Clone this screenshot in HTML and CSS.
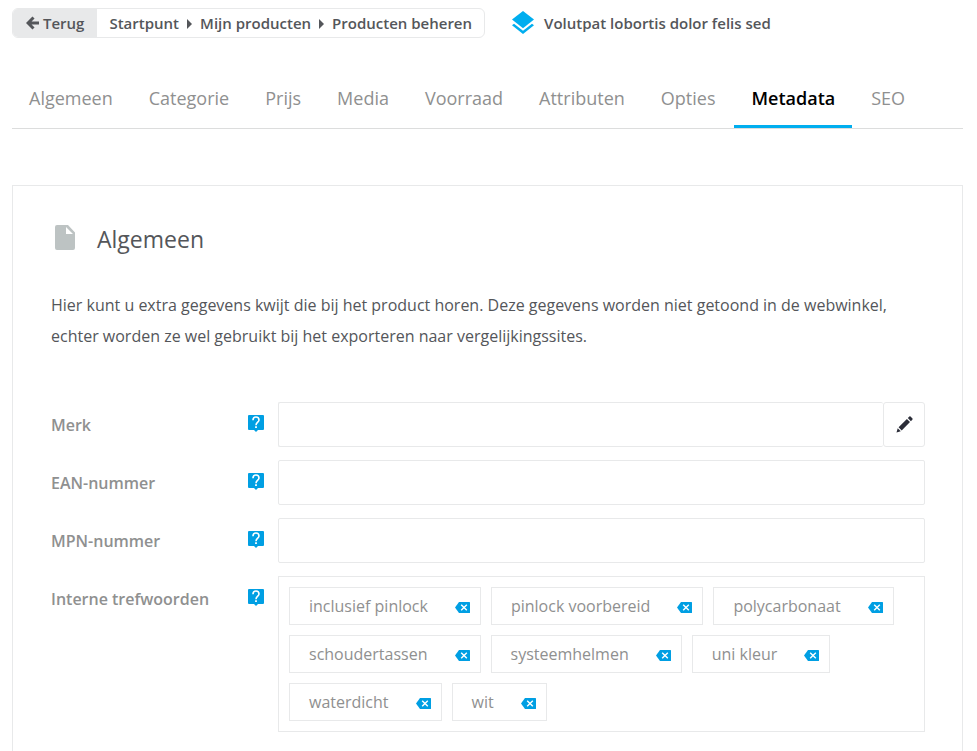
FILE: index.html
```html
<!DOCTYPE html>
<html lang="nl">
<head>
    <meta charset="UTF-8">
    <meta name="viewport" content="width=device-width, initial-scale=1.0">
    <title>Producten beheren</title>
    <link rel="stylesheet" href="styles.css">
</head>
<body>

    <!-- shared icons -->
    <svg class="sprite" aria-hidden="true">
        <symbol id="icon-help" viewBox="0 0 16 17">
            <path fill="#009fe3" d="M1 0h14a1 1 0 0 1 1 1v13a1 1 0 0 1-1 1h-5l-2 2-2-2H1a1 1 0 0 1-1-1V1a1 1 0 0 1 1-1z"/>
            <path fill="none" stroke="#fff" stroke-width="1.600" d="M5 5.200V5a3 3 0 0 1 6 0C11 7 8 7.300 8 10.200"/>
            <path fill="#fff" d="M7.100 11.300h1.800v1.800H7.100z"/>
        </symbol>
        <symbol id="icon-remove" viewBox="0 0 15 11">
            <path fill="#009fe3" d="M4 0h10.500a.5.5 0 0 1 .5.5v10a.5.5 0 0 1-.5.5H4L0 5.500z"/>
            <path fill="none" stroke="#fff" stroke-width="1.400" d="M6.200 2.700l5.600 5.600M11.800 2.700L6.200 8.300"/>
        </symbol>
    </svg>

    <header class="topbar">
        <nav class="breadcrumb" aria-label="Kruimelpad">
            <a href="#" class="back">
                <svg width="13" height="14" viewBox="0 0 13 14"><path fill="none" stroke="#54565a" stroke-width="3" d="M7.500 1.500L2 7l5.500 5.500M2.500 7H13"/></svg>
                Terug
            </a>
            <div class="crumbs">
                <a href="#">Startpunt</a>
                <span class="arrow"></span>
                <a href="#">Mijn producten</a>
                <span class="arrow"></span>
                <a href="#">Producten beheren</a>
            </div>
        </nav>
        <div class="product">
            <svg width="22" height="24" viewBox="0 0 22 24">
                <path fill="#00aeef" d="M11 0l11 8.500L11 17.200 0 8.500z"/>
                <path fill="#00aeef" d="M0 14.300l2-1.600 9 7.100 9-7.100 2 1.600L11 23z"/>
            </svg>
            <span>Volutpat lobortis dolor felis sed</span>
        </div>
    </header>

    <nav class="tabs" aria-label="Productgegevens">
        <a href="#">Algemeen</a>
        <a href="#">Categorie</a>
        <a href="#">Prijs</a>
        <a href="#">Media</a>
        <a href="#">Voorraad</a>
        <a href="#">Attributen</a>
        <a href="#">Opties</a>
        <a href="#" class="active" aria-current="page">Metadata</a>
        <a href="#">SEO</a>
    </nav>

    <main class="panel">
        <h1>
            <svg width="20" height="25" viewBox="0 0 20 25">
                <path fill="#bdc3c3" fill-rule="evenodd" d="M2 0h11l7 7.500V23a2 2 0 0 1-2 2H2a2 2 0 0 1-2-2V2a2 2 0 0 1 2-2zM11 2v7h7z"/>
            </svg>
            Algemeen
        </h1>
        <p class="intro">Hier kunt u extra gegevens kwijt die bij het product horen. Deze gegevens worden niet getoond in de webwinkel, echter worden ze wel gebruikt bij het exporteren naar vergelijkingssites.</p>

        <form class="fields">
            <div class="field">
                <label for="brand">Merk</label>
                <button type="button" class="help" aria-label="Uitleg merk"><svg><use href="#icon-help"/></svg></button>
                <div class="input-group">
                    <input type="text" id="brand">
                    <button type="button" class="edit" aria-label="Merk bewerken">
                        <svg width="17" height="17" viewBox="0 0 17 17">
                            <path fill="#2b2d38" d="M0.500 16.500l1.200-4.300 3.100 3.100zM2.600 11.300l8.300-8.300 3.100 3.100-8.300 8.300zM11.800 2.100l1.400-1.400c.5-.5 1-.5 1.500 0l1.600 1.600c.5.5.5 1 0 1.500l-1.400 1.400z"/>
                        </svg>
                    </button>
                </div>
            </div>
            <div class="field">
                <label for="ean">EAN-nummer</label>
                <button type="button" class="help" aria-label="Uitleg EAN-nummer"><svg><use href="#icon-help"/></svg></button>
                <input type="text" id="ean">
            </div>
            <div class="field">
                <label for="mpn">MPN-nummer</label>
                <button type="button" class="help" aria-label="Uitleg MPN-nummer"><svg><use href="#icon-help"/></svg></button>
                <input type="text" id="mpn">
            </div>
            <div class="field">
                <span class="label" id="keywords">Interne trefwoorden</span>
                <button type="button" class="help" aria-label="Uitleg trefwoorden"><svg><use href="#icon-help"/></svg></button>
                <ul class="tags" aria-labelledby="keywords">
                    <li>inclusief pinlock <button type="button" aria-label="Verwijder inclusief pinlock"><svg><use href="#icon-remove"/></svg></button></li>
                    <li>pinlock voorbereid <button type="button" aria-label="Verwijder pinlock voorbereid"><svg><use href="#icon-remove"/></svg></button></li>
                    <li>polycarbonaat <button type="button" aria-label="Verwijder polycarbonaat"><svg><use href="#icon-remove"/></svg></button></li>
                    <li>schoudertassen <button type="button" aria-label="Verwijder schoudertassen"><svg><use href="#icon-remove"/></svg></button></li>
                    <li>systeemhelmen <button type="button" aria-label="Verwijder systeemhelmen"><svg><use href="#icon-remove"/></svg></button></li>
                    <li>uni kleur <button type="button" aria-label="Verwijder uni kleur"><svg><use href="#icon-remove"/></svg></button></li>
                    <li>waterdicht <button type="button" aria-label="Verwijder waterdicht"><svg><use href="#icon-remove"/></svg></button></li>
                    <li>wit <button type="button" aria-label="Verwijder wit"><svg><use href="#icon-remove"/></svg></button></li>
                </ul>
            </div>
        </form>
    </main>

</body>
</html>
```
FILE: styles.css
```css
* {
    margin: 0;
    padding: 0;
    box-sizing: border-box;
}
body {
    padding: 8px 14px 0 12px;
    background: #fff;
    color: #54565a;
    font-family: "Open Sans", sans-serif;
    font-size: 16px;
}
a {
    color: inherit;
    text-decoration: none;
}
button {
    border: 0;
    background: none;
    cursor: pointer;
}
svg {
    display: block;
    flex-shrink: 0;
}
.sprite {
    position: absolute;
    width: 0;
    height: 0;
}

/* top bar */
.topbar {
    display: flex;
    align-items: center;
    gap: 27px;
    font-size: 15px;
    font-weight: 600;
    line-height: 28px;
}
.breadcrumb {
    display: flex;
    border: 1px solid #e8e9ea;
    border-radius: 6px;
    overflow: hidden;
}
.back {
    display: flex;
    align-items: center;
    gap: 4px;
    padding: 0 13px;
    background: #e8e9ea;
}
.crumbs {
    display: flex;
    align-items: center;
    gap: 8px;
    padding: 0 12px;
}
.arrow {
    margin-top: 2px;
    border-left: 5px solid #54565a;
    border-top: 5px solid transparent;
    border-bottom: 5px solid transparent;
}
.product {
    display: flex;
    align-items: center;
    gap: 10px;
}

/* tabs */
.tabs {
    display: flex;
    gap: 2px;
    margin-top: 34px;
    border-bottom: 1px solid #dcdddd;
    color: #8f9090;
    font-size: 18px;
    line-height: 53px;
}
.tabs a {
    padding: 0 17px;
    border-bottom: 3px solid transparent;
}
.tabs .active {
    border-bottom-color: #00aeef;
    color: #000;
    font-weight: 600;
}

/* panel */
.panel {
    margin-top: 56px;
    padding: 39px 37px 60px 38px;
    border: 1px solid #e8e9ea;
}
h1 {
    display: flex;
    align-items: flex-start;
    gap: 22px;
    padding-left: 4px;
    font-size: 23px;
    font-weight: 400;
    line-height: 28px;
}
.intro {
    margin-top: 37px;
    line-height: 31px;
}
.fields {
    display: grid;
    gap: 12px;
    margin-top: 50px;
}
.field {
    display: grid;
    grid-template-columns: 197px 30px 1fr;
    align-items: start;
}
.field label,
.field .label {
    color: #8f9090;
    font-weight: 600;
    line-height: 46px;
}
.help {
    padding-top: 13px;
}
.help svg {
    width: 16px;
    height: 17px;
}
input {
    width: 100%;
    height: 45px;
    padding: 0 12px;
    border: 1px solid #e8e9ea;
    border-radius: 2px;
    outline: 0;
    color: #54565a;
    font: inherit;
}
.input-group {
    display: flex;
}
.input-group input {
    border-right: 0;
}
.edit {
    display: flex;
    align-items: center;
    justify-content: center;
    flex: 0 0 42px;
    border: 1px solid #e8e9ea;
    border-radius: 3px;
}
.tags {
    display: flex;
    flex-wrap: wrap;
    gap: 10px;
    padding: 10px;
    border: 1px solid #e8e9ea;
    color: #8f9090;
    list-style: none;
}
.tags li {
    display: flex;
    align-items: center;
    gap: 27px;
    padding: 0 10px 0 19px;
    border: 1px solid #e8e9ea;
    line-height: 36px;
}
.tags button {
    padding-top: 2px;
}
.tags svg {
    width: 15px;
    height: 11px;
}
```
